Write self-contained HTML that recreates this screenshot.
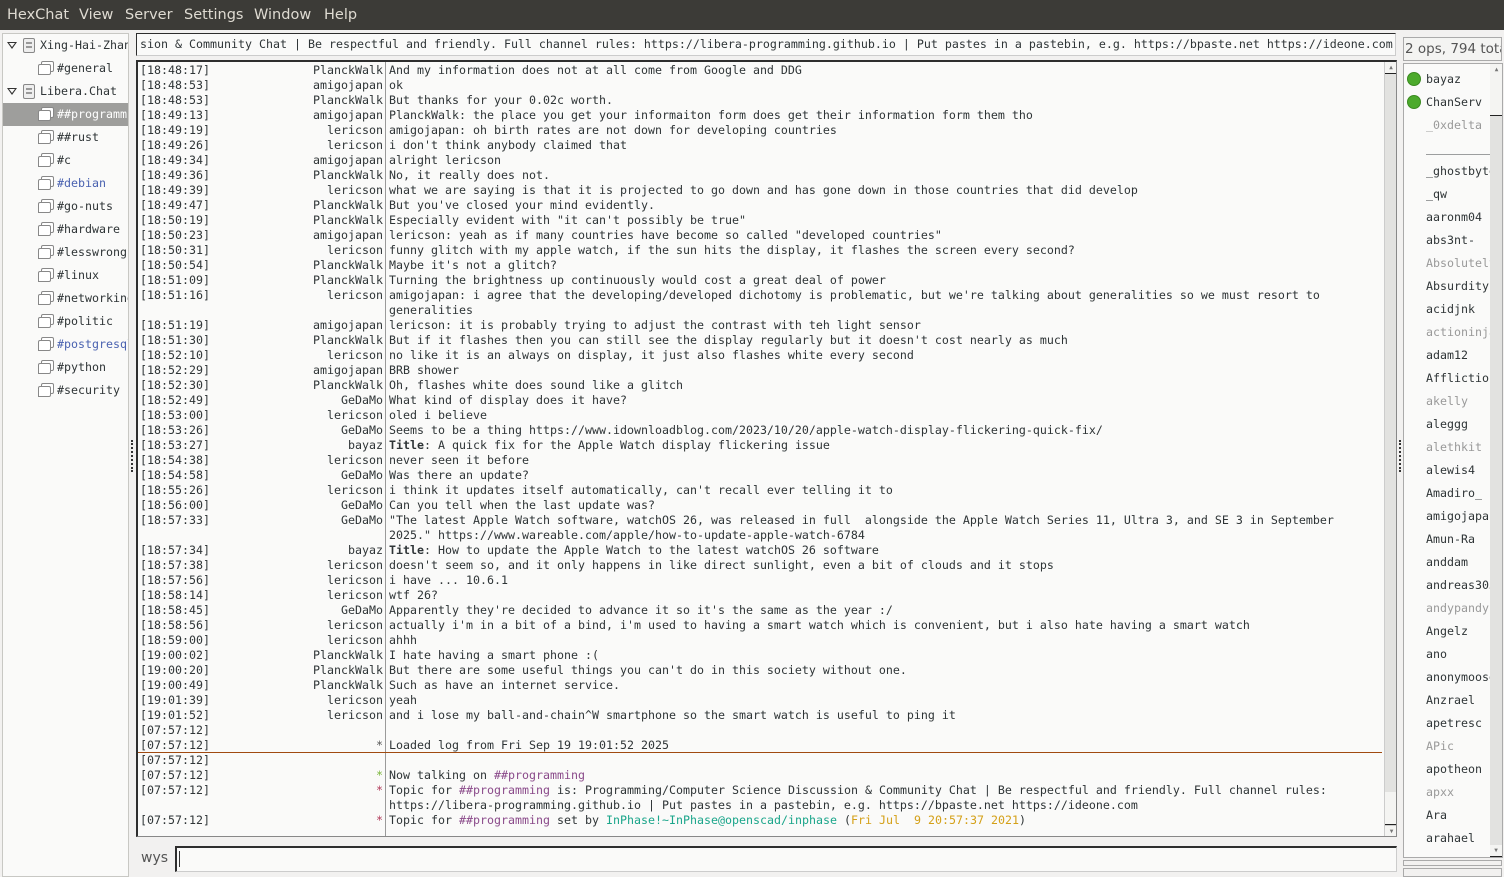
<!DOCTYPE html>
<html><head><meta charset="utf-8"><style>
*{margin:0;padding:0;box-sizing:border-box}
body{width:1504px;height:877px;background:#f2f1f0;position:relative;overflow:hidden;font-family:"DejaVu Sans Mono","Liberation Mono",monospace;font-size:11.63px;color:#2e3436}
#menu{position:absolute;left:0;top:0;width:1504px;height:30px;background:#3c3b37;color:#dfdbd2;font-family:"DejaVu Sans","Liberation Sans",sans-serif;font-size:14.5px}
#menu span{position:absolute;top:7px}
#tree{position:absolute;left:2px;top:33px;width:127px;height:844px;background:#fafaf9;border:1px solid #c8c8c4;overflow:hidden}
.tr{position:absolute;left:0;width:127px;height:23px;line-height:23px;white-space:nowrap;overflow:hidden}
.tr.sel{background:#9e9e9c;color:#fff}
.ic{position:absolute;top:4px;width:15px;height:15px}
.ic:before{content:"";position:absolute;left:3px;top:0;width:11px;height:9px;border:1.3px solid #888;border-radius:2px;background:#fff}
.ic:after{content:"";position:absolute;left:0;top:3px;width:11px;height:9px;border:1.3px solid #888;border-radius:2px 2px 2px 0;background:#fff}
.sv{position:absolute;top:4px;left:20px;width:12px;height:15px;border:1.3px solid #888;border-radius:2px;background:#eee}
.sv:before{content:"";position:absolute;left:2px;top:3px;width:6px;height:2px;background:#999}
.sv:after{content:"";position:absolute;left:2px;top:7px;width:6px;height:2px;background:#999}
.tri{position:absolute;left:4px;top:8px;width:0;height:0;border-left:5px solid transparent;border-right:5px solid transparent;border-top:7px solid #333}
.tri:after{content:"";position:absolute;left:-3px;top:-6px;border-left:3px solid transparent;border-right:3px solid transparent;border-top:4px solid #fafaf9}
#topic{position:absolute;left:136px;top:33px;width:1260px;height:23px;background:#fafaf9;border:1px solid #2e2e2e;border-right-color:#ccc;border-bottom-color:#ccc;white-space:nowrap;overflow:hidden;line-height:21px;padding-left:3px}
#chat{position:absolute;left:136px;top:60px;width:1261px;height:777px;background:#fafaf9;border:1px solid #888;border-left:2px solid #2e2e2e;border-top:2px solid #2e2e2e;overflow:hidden}
#sep{position:absolute;left:247px;top:0;width:1px;height:777px;background:#9a9a9a}
.l{position:absolute;left:0;width:1244px;height:15px;line-height:15px;white-space:pre}
.ts{position:absolute;left:2px}
.nk{position:absolute;right:999px;text-align:right}
.tx{position:absolute;left:251px}
#hr{position:absolute;left:0;top:690px;width:1244px;height:1px;background:#a04a10}
#vs{position:absolute;left:1246px;top:0;width:13px;height:775px;background:#e2e2e0;border-left:1px solid #ccc}
.btn{position:absolute;left:0;width:13px;height:12px;background:#f4f4f2;border-right:1px solid #222;border-bottom:1px solid #222;font-size:6px;text-align:center;line-height:12px;color:#777}
#input{position:absolute;left:175px;top:846px;width:1222px;height:26px;background:#fafaf9;border:1px solid #ccc;border-left:2px solid #2e2e2e;border-top:2px solid #2e2e2e}
#nickl{position:absolute;left:141px;top:850px;font-family:"DejaVu Sans",sans-serif;font-size:14px;color:#555}
#ops{position:absolute;left:1403px;top:37px;width:99px;height:24px;border:1px solid #aaa;background:#f4f4f2;font-family:"DejaVu Sans",sans-serif;font-size:13.5px;color:#555;line-height:22px;padding-left:1px;white-space:nowrap;overflow:hidden}
#users{position:absolute;left:1403px;top:63px;width:100px;height:795px;background:#fafaf9;border:1px solid #aaa;overflow:hidden}
.u{position:absolute;left:22px;height:23px;line-height:23px;white-space:nowrap}
.g{color:#999}
.dot{position:absolute;left:3px;width:14px;height:14px;border-radius:50%;background:#4caa2c;border:1px solid #3a8a20}
#us{position:absolute;left:86px;top:0;width:13px;height:793px;background:#e2e2e0}
.grip{position:absolute;width:2px;height:32px;border-left:2px dotted #333}
</style></head><body>
<div id="menu"><span style="left:7px">HexChat</span><span style="left:79px">View</span><span style="left:125px">Server</span><span style="left:184px">Settings</span><span style="left:254px">Window</span><span style="left:324px">Help</span></div>

<div id="tree">
<div class="tr" style="top:0"><div class="tri"></div><div class="sv"></div><span style="position:absolute;left:37px">Xing-Hai-Zhang</span></div>
<div class="tr" style="top:23px"><div class="ic" style="left:35px"></div><span style="position:absolute;left:54px">#general</span></div>
<div class="tr" style="top:46px"><div class="tri"></div><div class="sv"></div><span style="position:absolute;left:37px">Libera.Chat</span></div>
<div class="tr sel" style="top:69px"><div class="ic" style="left:35px"></div><span style="position:absolute;left:54px">##programming</span></div>
<div class="tr" style="top:92px"><div class="ic" style="left:35px"></div><span style="position:absolute;left:54px">##rust</span></div>
<div class="tr" style="top:115px"><div class="ic" style="left:35px"></div><span style="position:absolute;left:54px">#c</span></div>
<div class="tr" style="top:138px"><div class="ic" style="left:35px"></div><span style="position:absolute;left:54px;color:#4a62b0">#debian</span></div>
<div class="tr" style="top:161px"><div class="ic" style="left:35px"></div><span style="position:absolute;left:54px">#go-nuts</span></div>
<div class="tr" style="top:184px"><div class="ic" style="left:35px"></div><span style="position:absolute;left:54px">#hardware</span></div>
<div class="tr" style="top:207px"><div class="ic" style="left:35px"></div><span style="position:absolute;left:54px">#lesswrong</span></div>
<div class="tr" style="top:230px"><div class="ic" style="left:35px"></div><span style="position:absolute;left:54px">#linux</span></div>
<div class="tr" style="top:253px"><div class="ic" style="left:35px"></div><span style="position:absolute;left:54px">#networking</span></div>
<div class="tr" style="top:276px"><div class="ic" style="left:35px"></div><span style="position:absolute;left:54px">#politic</span></div>
<div class="tr" style="top:299px"><div class="ic" style="left:35px"></div><span style="position:absolute;left:54px;color:#4a62b0">#postgresql</span></div>
<div class="tr" style="top:322px"><div class="ic" style="left:35px"></div><span style="position:absolute;left:54px">#python</span></div>
<div class="tr" style="top:345px"><div class="ic" style="left:35px"></div><span style="position:absolute;left:54px">#security</span></div>
</div>
<div class="grip" style="left:131px;top:440px"></div>
<div class="grip" style="left:1399px;top:440px"></div>

<div id="topic">sion &amp; Community Chat | Be respectful and friendly. Full channel rules: https://libera-programming.github.io | Put pastes in a pastebin, e.g. https://bpaste.net https://ideone.com</div>

<div id="chat">
<div id="sep"></div>
<div id="hr"></div>
<div style="position:absolute;left:0;top:1px;width:1244px">
<div class="l" style="top:0"><span class="ts">[18:48:17]</span><span class="nk">PlanckWalk</span><span class="tx">And my information does not at all come from Google and DDG</span></div>
<div class="l" style="top:15px"><span class="ts">[18:48:53]</span><span class="nk">amigojapan</span><span class="tx">ok</span></div>
<div class="l" style="top:30px"><span class="ts">[18:48:53]</span><span class="nk">PlanckWalk</span><span class="tx">But thanks for your 0.02c worth.</span></div>
<div class="l" style="top:45px"><span class="ts">[18:49:13]</span><span class="nk">amigojapan</span><span class="tx">PlanckWalk: the place you get your informaiton form does get their information form them tho</span></div>
<div class="l" style="top:60px"><span class="ts">[18:49:19]</span><span class="nk">lericson</span><span class="tx">amigojapan: oh birth rates are not down for developing countries</span></div>
<div class="l" style="top:75px"><span class="ts">[18:49:26]</span><span class="nk">lericson</span><span class="tx">i don't think anybody claimed that</span></div>
<div class="l" style="top:90px"><span class="ts">[18:49:34]</span><span class="nk">amigojapan</span><span class="tx">alright lericson</span></div>
<div class="l" style="top:105px"><span class="ts">[18:49:36]</span><span class="nk">PlanckWalk</span><span class="tx">No, it really does not.</span></div>
<div class="l" style="top:120px"><span class="ts">[18:49:39]</span><span class="nk">lericson</span><span class="tx">what we are saying is that it is projected to go down and has gone down in those countries that did develop</span></div>
<div class="l" style="top:135px"><span class="ts">[18:49:47]</span><span class="nk">PlanckWalk</span><span class="tx">But you've closed your mind evidently.</span></div>
<div class="l" style="top:150px"><span class="ts">[18:50:19]</span><span class="nk">PlanckWalk</span><span class="tx">Especially evident with "it can't possibly be true"</span></div>
<div class="l" style="top:165px"><span class="ts">[18:50:23]</span><span class="nk">amigojapan</span><span class="tx">lericson: yeah as if many countries have become so called "developed countries"</span></div>
<div class="l" style="top:180px"><span class="ts">[18:50:31]</span><span class="nk">lericson</span><span class="tx">funny glitch with my apple watch, if the sun hits the display, it flashes the screen every second?</span></div>
<div class="l" style="top:195px"><span class="ts">[18:50:54]</span><span class="nk">PlanckWalk</span><span class="tx">Maybe it's not a glitch?</span></div>
<div class="l" style="top:210px"><span class="ts">[18:51:09]</span><span class="nk">PlanckWalk</span><span class="tx">Turning the brightness up continuously would cost a great deal of power</span></div>
<div class="l" style="top:225px"><span class="ts">[18:51:16]</span><span class="nk">lericson</span><span class="tx">amigojapan: i agree that the developing/developed dichotomy is problematic, but we're talking about generalities so we must resort to</span></div>
<div class="l" style="top:240px"><span class="tx">generalities</span></div>
<div class="l" style="top:255px"><span class="ts">[18:51:19]</span><span class="nk">amigojapan</span><span class="tx">lericson: it is probably trying to adjust the contrast with teh light sensor</span></div>
<div class="l" style="top:270px"><span class="ts">[18:51:30]</span><span class="nk">PlanckWalk</span><span class="tx">But if it flashes then you can still see the display regularly but it doesn't cost nearly as much</span></div>
<div class="l" style="top:285px"><span class="ts">[18:52:10]</span><span class="nk">lericson</span><span class="tx">no like it is an always on display, it just also flashes white every second</span></div>
<div class="l" style="top:300px"><span class="ts">[18:52:29]</span><span class="nk">amigojapan</span><span class="tx">BRB shower</span></div>
<div class="l" style="top:315px"><span class="ts">[18:52:30]</span><span class="nk">PlanckWalk</span><span class="tx">Oh, flashes white does sound like a glitch</span></div>
<div class="l" style="top:330px"><span class="ts">[18:52:49]</span><span class="nk">GeDaMo</span><span class="tx">What kind of display does it have?</span></div>
<div class="l" style="top:345px"><span class="ts">[18:53:00]</span><span class="nk">lericson</span><span class="tx">oled i believe</span></div>
<div class="l" style="top:360px"><span class="ts">[18:53:26]</span><span class="nk">GeDaMo</span><span class="tx">Seems to be a thing https://www.idownloadblog.com/2023/10/20/apple-watch-display-flickering-quick-fix/</span></div>
<div class="l" style="top:375px"><span class="ts">[18:53:27]</span><span class="nk">bayaz</span><span class="tx"><b>Title</b>: A quick fix for the Apple Watch display flickering issue</span></div>
<div class="l" style="top:390px"><span class="ts">[18:54:38]</span><span class="nk">lericson</span><span class="tx">never seen it before</span></div>
<div class="l" style="top:405px"><span class="ts">[18:54:58]</span><span class="nk">GeDaMo</span><span class="tx">Was there an update?</span></div>
<div class="l" style="top:420px"><span class="ts">[18:55:26]</span><span class="nk">lericson</span><span class="tx">i think it updates itself automatically, can't recall ever telling it to</span></div>
<div class="l" style="top:435px"><span class="ts">[18:56:00]</span><span class="nk">GeDaMo</span><span class="tx">Can you tell when the last update was?</span></div>
<div class="l" style="top:450px"><span class="ts">[18:57:33]</span><span class="nk">GeDaMo</span><span class="tx">"The latest Apple Watch software, watchOS 26, was released in full  alongside the Apple Watch Series 11, Ultra 3, and SE 3 in September</span></div>
<div class="l" style="top:465px"><span class="tx">2025." https://www.wareable.com/apple/how-to-update-apple-watch-6784</span></div>
<div class="l" style="top:480px"><span class="ts">[18:57:34]</span><span class="nk">bayaz</span><span class="tx"><b>Title</b>: How to update the Apple Watch to the latest watchOS 26 software</span></div>
<div class="l" style="top:495px"><span class="ts">[18:57:38]</span><span class="nk">lericson</span><span class="tx">doesn't seem so, and it only happens in like direct sunlight, even a bit of clouds and it stops</span></div>
<div class="l" style="top:510px"><span class="ts">[18:57:56]</span><span class="nk">lericson</span><span class="tx">i have ... 10.6.1</span></div>
<div class="l" style="top:525px"><span class="ts">[18:58:14]</span><span class="nk">lericson</span><span class="tx">wtf 26?</span></div>
<div class="l" style="top:540px"><span class="ts">[18:58:45]</span><span class="nk">GeDaMo</span><span class="tx">Apparently they're decided to advance it so it's the same as the year :/</span></div>
<div class="l" style="top:555px"><span class="ts">[18:58:56]</span><span class="nk">lericson</span><span class="tx">actually i'm in a bit of a bind, i'm used to having a smart watch which is convenient, but i also hate having a smart watch</span></div>
<div class="l" style="top:570px"><span class="ts">[18:59:00]</span><span class="nk">lericson</span><span class="tx">ahhh</span></div>
<div class="l" style="top:585px"><span class="ts">[19:00:02]</span><span class="nk">PlanckWalk</span><span class="tx">I hate having a smart phone :(</span></div>
<div class="l" style="top:600px"><span class="ts">[19:00:20]</span><span class="nk">PlanckWalk</span><span class="tx">But there are some useful things you can't do in this society without one.</span></div>
<div class="l" style="top:615px"><span class="ts">[19:00:49]</span><span class="nk">PlanckWalk</span><span class="tx">Such as have an internet service.</span></div>
<div class="l" style="top:630px"><span class="ts">[19:01:39]</span><span class="nk">lericson</span><span class="tx">yeah</span></div>
<div class="l" style="top:645px"><span class="ts">[19:01:52]</span><span class="nk">lericson</span><span class="tx">and i lose my ball-and-chain^W smartphone so the smart watch is useful to ping it</span></div>
<div class="l" style="top:660px"><span class="ts">[07:57:12]</span></div>
<div class="l" style="top:675px"><span class="ts">[07:57:12]</span><span class="nk" style="color:#555">*</span><span class="tx">Loaded log from Fri Sep 19 19:01:52 2025</span></div>
<div class="l" style="top:690px"><span class="ts">[07:57:12]</span></div>
<div class="l" style="top:705px"><span class="ts">[07:57:12]</span><span class="nk" style="color:#7ab53a">*</span><span class="tx">Now talking on <span style="color:#8a4a8a">##programming</span></span></div>
<div class="l" style="top:720px"><span class="ts">[07:57:12]</span><span class="nk" style="color:#b03a5a">*</span><span class="tx">Topic for <span style="color:#8a4a8a">##programming</span> is: Programming/Computer Science Discussion &amp; Community Chat | Be respectful and friendly. Full channel rules:</span></div>
<div class="l" style="top:735px"><span class="tx">https://libera-programming.github.io | Put pastes in a pastebin, e.g. https://bpaste.net https://ideone.com</span></div>
<div class="l" style="top:750px"><span class="ts">[07:57:12]</span><span class="nk" style="color:#b03a5a">*</span><span class="tx">Topic for <span style="color:#8a4a8a">##programming</span> set by <span style="color:#1aa58a">InPhase!~InPhase@openscad/inphase</span> (<span style="color:#d4a017">Fri Jul  9 20:57:37 2021</span>)</span></div>
</div>
<div id="vs">
<div class="btn" style="top:0">▲</div>
<div style="position:absolute;left:0;top:730px;width:13px;height:33px;background:#f4f4f2;border-right:1px solid #222;border-bottom:1px solid #222"></div>
<div class="btn" style="top:763px;border:none;border-top:1px solid #ccc">▼</div>
</div>
</div>

<div id="nickl">wys</div>
<div id="input"><div style="position:absolute;left:2px;top:3px;width:1px;height:16px;background:#333"></div></div>

<div id="ops">2 ops, 794 total</div>
<div id="users">
<div style="position:absolute;left:0;top:1px;width:100px;height:800px">
<div class="dot" style="top:7px"></div><div class="u" style="top:3px">bayaz</div>
<div class="dot" style="top:30px"></div><div class="u" style="top:26px">ChanServ</div>
<div class="u g" style="top:49px">_0xdelta</div>
<div class="u" style="top:72px">___________</div>
<div class="u" style="top:95px">_ghostbyte</div>
<div class="u" style="top:118px">_qw</div>
<div class="u" style="top:141px">aaronm04</div>
<div class="u" style="top:164px">abs3nt-</div>
<div class="u g" style="top:187px">Absolutely</div>
<div class="u" style="top:210px">Absurdity</div>
<div class="u" style="top:233px">acidjnk</div>
<div class="u g" style="top:256px">actioninja</div>
<div class="u" style="top:279px">adam12</div>
<div class="u" style="top:302px">Affliction</div>
<div class="u g" style="top:325px">akelly</div>
<div class="u" style="top:348px">aleggg</div>
<div class="u g" style="top:371px">alethkit</div>
<div class="u" style="top:394px">alewis4</div>
<div class="u" style="top:417px">Amadiro_</div>
<div class="u" style="top:440px">amigojapan</div>
<div class="u" style="top:463px">Amun-Ra</div>
<div class="u" style="top:486px">anddam</div>
<div class="u" style="top:509px">andreas303</div>
<div class="u g" style="top:532px">andypandy</div>
<div class="u" style="top:555px">Angelz</div>
<div class="u" style="top:578px">ano</div>
<div class="u" style="top:601px">anonymoose</div>
<div class="u" style="top:624px">Anzrael</div>
<div class="u" style="top:647px">apetresc</div>
<div class="u g" style="top:670px">APic</div>
<div class="u" style="top:693px">apotheon</div>
<div class="u g" style="top:716px">apxx</div>
<div class="u" style="top:739px">Ara</div>
<div class="u" style="top:762px">arahael</div>
</div>
<div id="us">
<div class="btn" style="top:0;border:none">▲</div>
<div style="position:absolute;left:0;top:12px;width:13px;height:40px;background:#f4f4f2;border-right:1px solid #222;border-bottom:1px solid #222"></div>
<div class="btn" style="top:781px">▼</div>
</div>
</div>
<div style="position:absolute;left:1403px;top:860px;width:99px;height:6px;border:1px solid #aaa"></div>
<div style="position:absolute;left:1403px;top:868px;width:99px;height:9px;border:1px solid #aaa"></div>
</body></html>
